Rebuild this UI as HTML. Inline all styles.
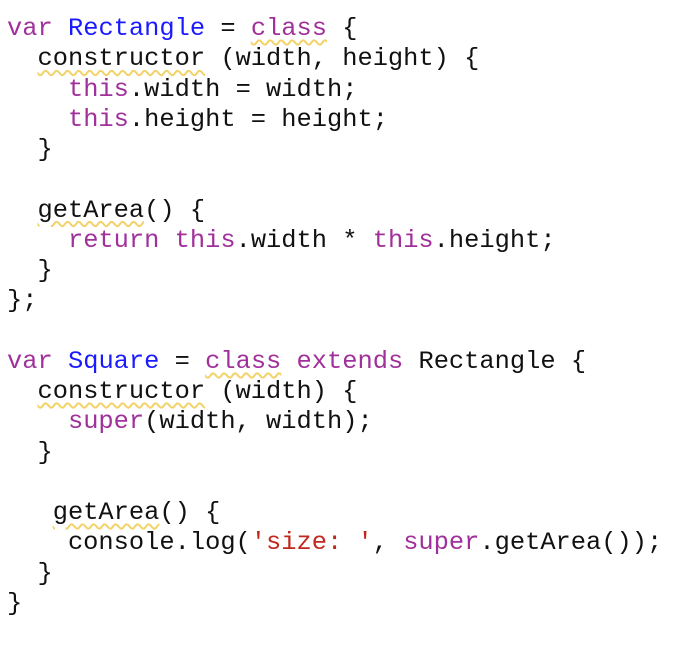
<!DOCTYPE html>
<html><head><style>
html,body{margin:0;background:#fff;width:682px;height:656px;overflow:hidden}
pre{margin:0;position:absolute;left:7px;top:14px;font-family:"Liberation Mono",monospace;font-size:25.4px;line-height:30.25px;color:#111}
.k{color:#a0309a}.b{color:#1a1aff}.s{color:#c0281e}
.w{text-decoration:underline wavy #f2d36a;text-decoration-thickness:1.5px;text-underline-offset:4px}
</style></head><body><pre><span class="k">var</span> <span class="b">Rectangle</span> = <span class="k w">class</span> {
  <span class="w">constructor</span> (width, height) {
    <span class="k">this</span>.width = width;
    <span class="k">this</span>.height = height;
  }

  <span class="w">getArea</span>() {
    <span class="k">return</span> <span class="k">this</span>.width * <span class="k">this</span>.height;
  }
};

<span class="k">var</span> <span class="b">Square</span> = <span class="k w">class</span> <span class="k">extends</span> Rectangle {
  <span class="w">constructor</span> (width) {
    <span class="k">super</span>(width, width);
  }

   <span class="w">getArea</span>() {
    console.log(<span class="s">'size: '</span>, <span class="k">super</span>.getArea());
  }
}</pre></body></html>
